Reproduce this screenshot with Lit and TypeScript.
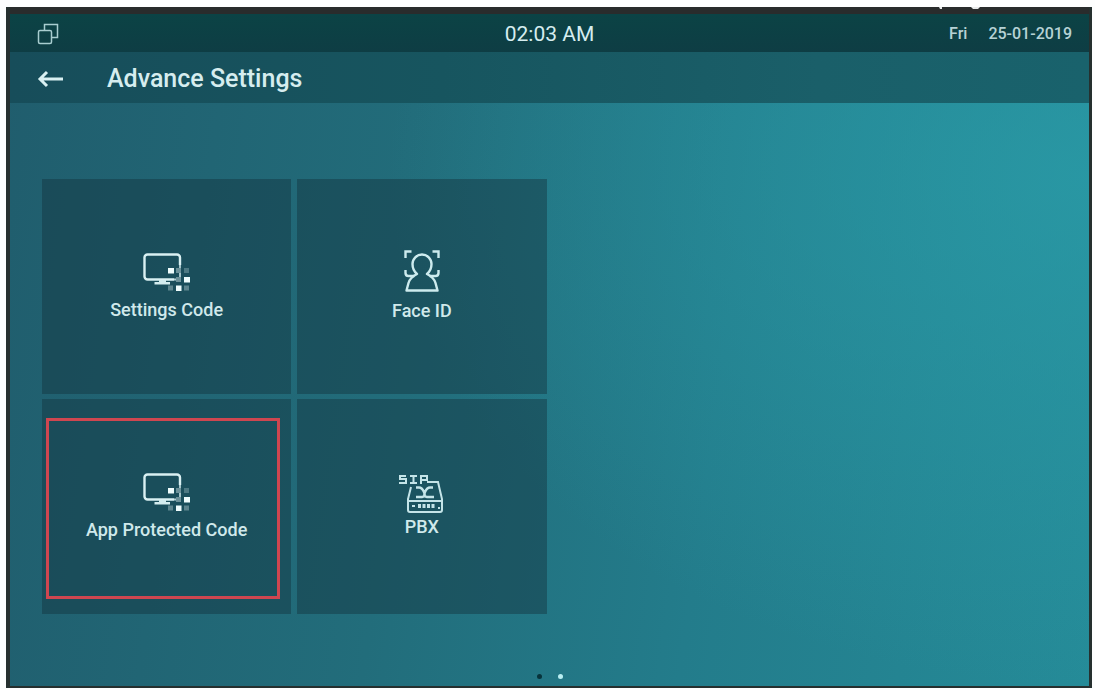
import { LitElement, html, css, svg, TemplateResult } from "lit";
import { customElement, property } from "lit/decorators.js";
import { classMap } from "lit/directives/class-map.js";

type IconName = "code" | "face" | "pbx";

interface Tile {
  label: string;
  icon: IconName;
  marked?: boolean;
}

const TILES: Tile[] = [
  { label: "Settings Code", icon: "code" },
  { label: "Face ID", icon: "face" },
  { label: "App Protected Code", icon: "code", marked: true },
  { label: "PBX", icon: "pbx" },
];

const ICONS: Record<IconName, TemplateResult> = {
  code: html`<svg width="48" height="40" viewBox="0 0 48 40" aria-hidden="true">
    ${svg`
      <path d="M37 14V6.500a3 3 0 0 0-3-3H4.500a3 3 0 0 0-3 3v19a3 3 0 0 0 3 3H31" fill="none" stroke="#d9f0f2" stroke-width="2.400"/>
      <path d="M37 14v12.500a2 2 0 0 1-2 2h-4" fill="none" stroke="#b4d1d5" stroke-width="1.800"/>
      <path d="M16 29h7v2h4v2.500H11.500V31H16z" fill="#d3ecee"/>
      <rect x="25" y="17" width="6" height="5.500" fill="#eefcfc"/>
      <rect x="33" y="17" width="5" height="5" fill="#6d929a"/>
      <rect x="41" y="17" width="5" height="5" fill="#4d7983"/>
      <rect x="33" y="26" width="5" height="5" fill="#6d929a"/>
      <rect x="41" y="26" width="6" height="5.500" fill="#eefcfc"/>
      <rect x="25" y="34.500" width="5" height="5" fill="#5d858e"/>
      <rect x="33" y="34.500" width="5.500" height="5.500" fill="#eefcfc"/>
      <rect x="41" y="34.500" width="5" height="5" fill="#5d858e"/>`}
  </svg>`,
  face: html`<svg width="36" height="42" viewBox="0 0 36 42" aria-hidden="true">
    ${svg`
      <g fill="none" stroke="#cdebee" stroke-width="2.400">
        <path d="M1.500 8V1.500h6M28.500 1.500h6V8"/>
        <path d="M1.500 20v3q0 3 3 3h6M34.500 20v3q0 3-3 3h-6"/>
        <path d="M13 24C9.500 21 8.500 17.500 8.500 14a9.500 9.500 0 0 1 19 0c0 3.500-1 7-4.500 10q7 3.500 8.500 9l2 7.500h-31l2-7.500q1.500-5.500 8.500-9z" stroke-linejoin="round"/>
      </g>`}
  </svg>`,
  pbx: html`<svg width="46" height="40" viewBox="0 0 46 40" aria-hidden="true">
    ${svg`
      <g fill="none" stroke="#c4e4e8" stroke-width="2">
        <path d="M7 2H1v3h6v4H0"/>
        <path d="M11 2h7M14.500 2v7M11 9h7"/>
        <path d="M22 10V2h6v4h-6"/>
        <path d="M28 8h11l4 17v11a2 2 0 0 1-2 2H11a2 2 0 0 1-2-2V25l3-12"/>
        <path d="M9 27h34"/>
        <path d="M17 13.500h3q3 0 5 4.500q2 4.500-2 5h-6M34 13.500h-3q-3 0-5 4.500q-2 4.500 2 5h7" stroke-width="2.500"/>
        <path d="M13 32h3M39 34h2" stroke-width="2"/>
        <path d="M19 32h17" stroke-width="4" stroke-dasharray="3 1.500"/>
      </g>`}
  </svg>`,
};

@customElement("settings-tile")
export class SettingsTile extends LitElement {
  @property() label = "";
  @property() icon: IconName = "code";
  @property({ type: Boolean }) marked = false;

  static styles = css`
    :host {
      display: flex;
      position: relative;
      min-height: 140px;
    }
    .tile {
      flex: 1;
      display: flex;
      flex-direction: column;
      align-items: center;
      justify-content: center;
      gap: 8px;
      padding: 0 0 2px;
      border: 0;
      background: rgba(20, 52, 64, 0.46);
      color: #d0e9eb;
      font: 500 18px/22px Roboto, sans-serif;
      cursor: pointer;
    }
    .glyph {
      display: flex;
    }
    .compact {
      gap: 2px;
    }
    .marker {
      position: absolute;
      inset: 19px 11px 15px 4px;
      border: 3px solid #cf4650;
      pointer-events: none;
    }
  `;

  render() {
    return html`
      <button class=${classMap({ tile: true, compact: this.icon === "pbx" })} type="button">
        <span class="glyph">${ICONS[this.icon]}</span>
        <span>${this.label}</span>
      </button>
      ${this.marked ? html`<span class="marker"></span>` : null}
    `;
  }
}

@customElement("app-root")
export class AppRoot extends LitElement {
  static styles = css`
    :host {
      display: flex;
      box-sizing: border-box;
      min-height: 100vh;
      padding: 7px 3px 1px 6px;
      background: #fdfefe;
      font-family: Roboto, sans-serif;
      color: #d6edef;
    }
    .device {
      flex: 1;
      display: flex;
      flex-direction: column;
      border: solid #26302f;
      border-width: 0 3px 2px 4px;
      background:
        radial-gradient(ellipse 65% 75% at 100% 25%, rgba(42, 156, 168, 0.75), rgba(42, 156, 168, 0) 100%),
        linear-gradient(98deg, #205d6d 0%, #226d7b 38%, #237c8b 65%, #258b98 100%);
    }
    .bezel {
      display: flex;
      justify-content: flex-end;
      height: 7px;
      padding-right: 108px;
      background: #292c2c;
    }
    .status {
      display: grid;
      grid-template-columns: 1fr auto 1fr;
      align-items: center;
      height: 38px;
      padding: 2px 17px 0;
      box-sizing: border-box;
      background: linear-gradient(#0b4345, #0e3d44);
    }
    .clock {
      font-size: 21px;
      line-height: 24px;
    }
    .date {
      display: flex;
      justify-content: flex-end;
      gap: 21px;
      font-size: 16px;
      line-height: 24px;
      font-weight: 500;
      color: #b6d2d5;
    }
    .titlebar {
      display: flex;
      align-items: center;
      gap: 43px;
      height: 51px;
      padding: 2px 27px 0;
      box-sizing: border-box;
      background: linear-gradient(90deg, #174d5a, #17555f 40%, #1a5f69 75%, #19626c);
    }
    .back,
    .windows {
      display: flex;
      padding: 0;
      border: 0;
      background: none;
      cursor: pointer;
      justify-self: start;
    }
    .windows {
      margin-left: 10px;
    }
    .title {
      margin: 0;
      font-size: 25px;
      line-height: 32px;
      font-weight: 500;
    }
    .page {
      flex: 1;
      display: flex;
      flex-direction: column;
      padding: 76px 32px 7px;
    }
    .tiles {
      flex: 1;
      display: grid;
      grid-template-columns: repeat(4, 1fr);
      grid-template-rows: 1fr 1fr;
      gap: 5px 6px;
    }
    .left {
      grid-column: 1;
    }
    .right {
      grid-column: 2;
    }
    .pager {
      display: flex;
      justify-content: center;
      gap: 16px;
      padding-top: 60px;
    }
    .dot {
      width: 5px;
      height: 5px;
      border-radius: 50%;
      background: #b9eef2;
    }
    .current {
      background: #07333b;
    }
  `;

  render() {
    return html`
      <div class="device">
        <div class="bezel">
          <svg width="44" height="2" viewBox="0 0 44 2" aria-hidden="true">
            <path d="M2 0h3v2H3zM34 0h9l-2 2h-5z" fill="#e8eaea" />
          </svg>
        </div>
        <header class="status">
          <button class="windows" type="button" aria-label="Recent windows">
            <svg width="22" height="22" viewBox="0 0 22 22" aria-hidden="true">
              <g fill="none" stroke="#a8cdd0" stroke-width="1.500">
                <path d="M7.500 7V1.500h13v13H15" />
                <rect x="1.500" y="7.500" width="13" height="13" rx="1.500" />
              </g>
            </svg>
          </button>
          <time class="clock">02:03 AM</time>
          <div class="date"><span>Fri</span><span>25-01-2019</span></div>
        </header>
        <div class="titlebar">
          <button class="back" type="button" aria-label="Back">
            <svg width="27" height="18" viewBox="0 0 27 18" aria-hidden="true">
              <path d="M26 9H3M10 2L3 9l7 7" fill="none" stroke="#d9f0f2" stroke-width="3" />
            </svg>
          </button>
          <h1 class="title">Advance Settings</h1>
        </div>
        <main class="page">
          <div class="tiles">
            ${TILES.map(
              (t, i) => html`<settings-tile
                class=${i % 2 ? "right" : "left"}
                .label=${t.label}
                .icon=${t.icon}
                .marked=${!!t.marked}
              ></settings-tile>`
            )}
          </div>
          <div class="pager"><span class="dot current"></span><span class="dot"></span></div>
        </main>
      </div>
    `;
  }
}
